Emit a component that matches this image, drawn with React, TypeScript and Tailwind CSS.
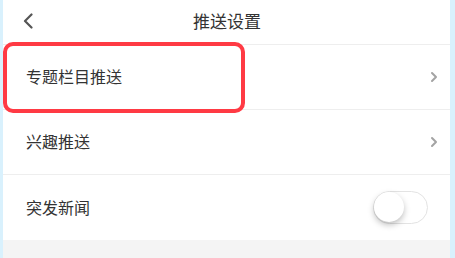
import React from "react";

const font = { fontFamily: '"Noto Sans CJK SC", "Noto Sans", sans-serif' };

const Chevron = () => (
  <svg width="8" height="12" viewBox="0 0 8 12" fill="none">
    <path d="M2 2l4 4-4 4" stroke="#a3a3a3" strokeWidth="2" strokeLinecap="round" strokeLinejoin="round" />
  </svg>
);

const Row: React.FC<{ label: string; children?: React.ReactNode; last?: boolean }> = ({
  label,
  children,
  last,
}) => (
  <div
    className={`h-[65px] flex items-center justify-between pl-[23px] pr-[12px] ${
      last ? "" : "border-b border-[#eeeeee]"
    }`}
  >
    <span className="text-[16px] text-[#333333] -mt-[2px]">{label}</span>
    {children}
  </div>
);

export default function App() {
  return (
    <div className="w-[455px] h-[258px] flex bg-[#d9f1fd] overflow-hidden" style={font}>
      <div className="w-[3px] shrink-0" />
      <div className="flex-1 flex flex-col bg-white relative">
        {/* header */}
        <div className="h-[45px] shrink-0 relative flex items-center justify-center border-b border-[#eeeeee]">
          <svg
            className="absolute left-[19px] top-[13px]"
            width="12"
            height="16"
            viewBox="0 0 12 16"
            fill="none"
          >
            <path d="M9.5 1.5L3 8l6.5 6.5" stroke="#555555" strokeWidth="2.2" strokeLinecap="round" strokeLinejoin="round" />
          </svg>
          <span className="text-[17px] text-[#333333] ml-[1px] -mt-[2px]">推送设置</span>
        </div>

        <Row label="专题栏目推送">
          <Chevron />
        </Row>
        <Row label="兴趣推送">
          <Chevron />
        </Row>
        <Row label="突发新闻" last>
          <div className="w-[55px] h-[33px] rounded-full border-[1.5px] border-[#e3e3e3] bg-white relative mr-[10px] -mt-[1px]">
            <div className="absolute left-0 top-0 w-[30px] h-[30px] rounded-full bg-white shadow-[0_3px_6px_rgba(0,0,0,0.25)]" />
          </div>
        </Row>

        <div className="flex-1 bg-[#f4f4f4]" />

        {/* highlight annotation */}
        <div className="absolute left-0 top-[42px] w-[242px] h-[71px] border-[4px] border-[#ff3a44] rounded-[10px]" />
      </div>
      <div className="w-[5px] shrink-0" />
    </div>
  );
}
